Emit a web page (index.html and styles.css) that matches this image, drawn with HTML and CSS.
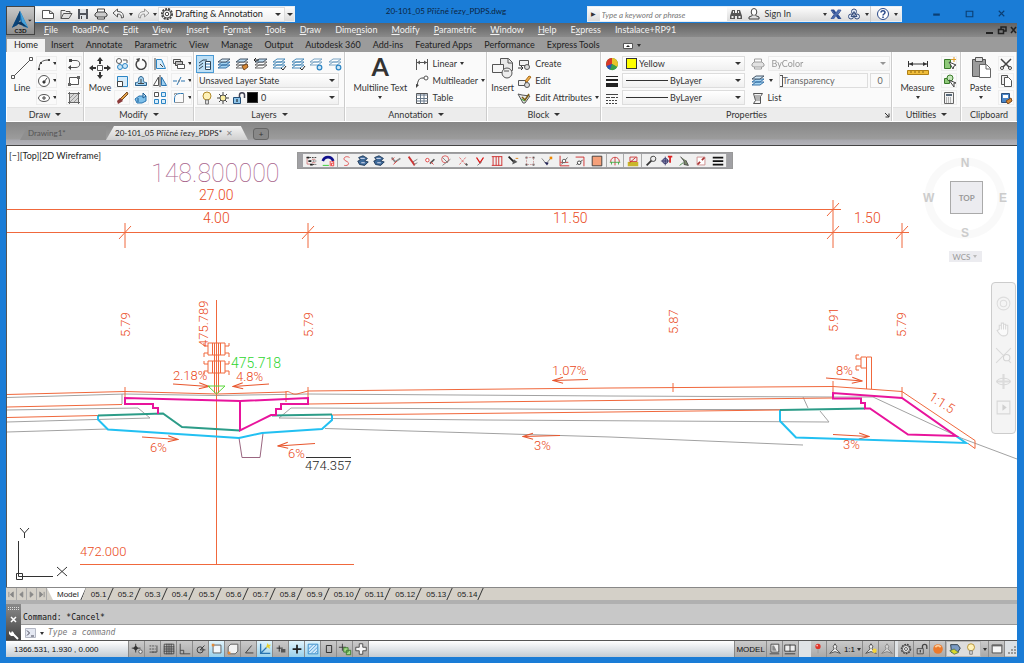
FILE: index.html
```html
<!DOCTYPE html>
<html lang="en">
    <head>
        <title>20-101_05 Příčné řezy_PDPS.dwg</title>
        <meta charset="utf-8">
        <link rel="stylesheet" href="styles.css">
    </head>
    <body>
        <!-- Icon set -->
        <svg class="defs" aria-hidden="true">
            <symbol id="i-logo" viewBox="0 0 28 29"><path d="M14 3 5 22l6-3 3-6 4 8 5 1z" fill="#1668a8"/><path d="M14 3v10l-3 6-6 3z" fill="#0c4377"/><path d="m14 3 9 19-6-2z" fill="#45a3dc"/><path d="m10 17 5-2 8 7-8-3z" fill="#0a3560"/><path d="m23 13h4l-2 2z" fill="#222"/></symbol>
            <symbol id="i-new" viewBox="0 0 16 16"><path d="M2.500 4.500h7l4 3v5h-11zM9.500 4.500v3h4" fill="#fff" stroke="#555"/></symbol>
            <symbol id="i-open" viewBox="0 0 16 16"><path d="M3 12.500v-8h4l1 1h4v2" fill="#eee" stroke="#555"/><path d="m3 12.500 2.500-5h8.500l-3 5z" fill="#ddd" stroke="#555"/></symbol>
            <symbol id="i-save" viewBox="0 0 16 16"><path d="M3 3h10v10H3z" fill="#50545c"/><path d="M5 3h6v4H5zM5 9h6v4H5z" fill="#dfe3e8"/><path d="M6 10h1v3H6z" fill="#444"/></symbol>
            <symbol id="i-print" viewBox="0 0 16 16"><path d="M4.500 6V3h7v3M4.500 10v3h7v-3" fill="#fff" stroke="#444"/><path d="M4 6h8l2 2v2l-2 1H4l-2-1V8z" fill="#ccc" stroke="#444"/></symbol>
            <symbol id="i-undo" viewBox="0 0 16 16"><path d="m2 7 4.500-4v2.500c4 0 6 1.500 6 6l-2 .5c0-3-1-4-4-4v3z" fill="#f4f4f4" stroke="#555"/></symbol>
            <symbol id="i-redo" viewBox="0 0 16 16"><path d="M14 7 9.500 3v2.500c-4 0-6 1.500-6 6l2 .5c0-3 1-4 4-4v3z" fill="#eee" stroke="#999"/></symbol>
            <symbol id="i-gear" viewBox="0 0 16 16"><circle cx="8" cy="8" r="5" fill="none" stroke="#444" stroke-width="2" stroke-dasharray="2 1"/><circle cx="8" cy="8" r="4" fill="#f2f2f2" stroke="#555"/><circle cx="8" cy="8" r="1.700" fill="#fff" stroke="#444"/></symbol>
            <symbol id="i-find" viewBox="0 0 16 16"><path d="M4 4h3v3h2V4h3l2 6v3H9v-3H7v3H2v-3z" fill="#555"/><path d="M3.500 10h2v2h-2zM10.500 10h2v2h-2zM5 5h1v2H5zM10 5h1v2h-1z" fill="#eee"/></symbol>
            <symbol id="i-user" viewBox="0 0 16 16"><ellipse cx="8" cy="6" rx="2.800" ry="3.500" fill="#fff" stroke="#444"/><path d="M6.500 9.500 3 11v2h10v-2l-3.500-1.500" fill="#ddd" stroke="#444"/></symbol>
            <symbol id="i-exchange" viewBox="0 0 16 16"><path d="M3 3.500h3L13 13h-3z" fill="#2d4d92"/><path d="M13 3.500h-3L3 13h3z" fill="#4d6cae"/><path d="M3 4l3 4.500L3 13M13 4l-3 4.500 3 4.500" stroke="#2d4d92" fill="none"/></symbol>
            <symbol id="i-a360" viewBox="0 0 16 16"><circle cx="8" cy="5.500" r="2.500" fill="#e4ecf8" stroke="#385080"/><circle cx="5" cy="10.500" r="2.500" fill="#e4ecf8" stroke="#385080"/><circle cx="11" cy="10.500" r="2.500" fill="#e4ecf8" stroke="#385080"/><path d="m8 5.500 3 5H5z" fill="none" stroke="#385080"/></symbol>
            <symbol id="i-help" viewBox="0 0 16 16"><circle cx="8" cy="8" r="5.500" fill="#fff" stroke="#2a4a8a"/><path d="M6 6.500c0-2.500 4-2.500 4 0 0 1.500-2 1.500-2 3M8 10.500v1.500" fill="none" stroke="#2a4a8a" stroke-width="1.500"/></symbol>
            <symbol id="i-line" viewBox="0 0 24 24"><path d="M3 21 21 3" stroke="#555" fill="none"/><path d="M1.500 19.500h3v3h-3zM19.500 1.500h3v3h-3z" fill="#fff" stroke="#555"/></symbol>
            <symbol id="i-arc" viewBox="0 0 16 16"><path d="M3 13c0-6 3-9 9-9" fill="none" stroke="#555"/><path d="M2 12h2v2H2zM4 6h2v2H4zM12 3h2v2h-2z" fill="#444"/></symbol>
            <symbol id="i-pline" viewBox="0 0 16 16"><path d="M5 4.500h5c5 0 5 7 0 7H3" fill="none" stroke="#555"/><path d="M5 9v5l-3-2.500zM3 3h3v3H3z" fill="#444"/></symbol>
            <symbol id="i-circle" viewBox="0 0 16 16"><circle cx="8" cy="8" r="5.500" fill="#fff" stroke="#555"/><path d="m8 9 3-4M7 8h2v2H7z" stroke="#444"/></symbol>
            <symbol id="i-rect" viewBox="0 0 16 16"><path d="M3.500 4.500h9v7h-9z" fill="#fff" stroke="#555"/><path d="M11 3h3v3h-3zM2 10h3v3H2z" fill="#666"/></symbol>
            <symbol id="i-ellipse" viewBox="0 0 16 16"><ellipse cx="8" cy="8" rx="5.500" ry="3.500" fill="#fff" stroke="#555"/><path d="M8 6v4M6 8h4" stroke="#444"/></symbol>
            <symbol id="i-hatch" viewBox="0 0 16 16"><path d="M3.500 3.500h9v9h-9z" fill="#d8d8d8" stroke="#666"/><path d="m4 8 4-4M4 12l8-8M8 12l4-4" stroke="#999"/><path d="M2 3.500h12M2 12.500h12M3.500 2v12M12.500 2v12" stroke="#666"/></symbol>
            <symbol id="i-move" viewBox="0 0 24 24"><path d="M12 4v4M12 16v4M4 12h4M16 12h4" stroke="#333" stroke-width="2"/><path d="m12 1 3 4H9zM12 23l3-4H9zM1 12l4-3v6zM23 12l-4-3v6z" fill="#333"/><path d="M9.500 9.500h5v5h-5z" fill="#fff" stroke="#555"/></symbol>
            <symbol id="i-copy" viewBox="0 0 16 16"><circle cx="5" cy="5" r="2.500" fill="#fff" stroke="#555"/><circle cx="6" cy="11" r="2.500" fill="#cde6f7" stroke="#2b85c4"/><circle cx="11" cy="10" r="2.500" fill="#cde6f7" stroke="#2b85c4"/><path d="M9 4h4v3" fill="none" stroke="#555"/></symbol>
            <symbol id="i-rotate" viewBox="0 0 16 16"><path d="M9 3.500a5 5 0 1 1-4 1" fill="none" stroke="#444" stroke-width="1.500"/><path d="m3 3 4-1-1 4z" fill="#444"/></symbol>
            <symbol id="i-stretch" viewBox="0 0 16 16"><path d="M4.500 3.500h5l4 9h-9z" fill="#d7ecfa" stroke="#2b85c4"/><path d="M3 2v12M8 8l3 3" stroke="#444"/></symbol>
            <symbol id="i-stack" viewBox="0 0 16 16"><path d="M2.500 3.500h7v4h-7z" fill="#eee" stroke="#555"/><path d="M4.500 5.500h7v4h-7z" fill="#bbb" stroke="#444"/><path d="M6.500 8.500h7v4h-7z" fill="#fff" stroke="#555"/></symbol>
            <symbol id="i-scale" viewBox="0 0 16 16"><path d="M3.500 3.500h10v10h-10z" fill="#d7ecfa" stroke="#2b85c4"/><path d="M3.500 8.500h5v5h-5z" fill="#fff" stroke="#444"/></symbol>
            <symbol id="i-offset" viewBox="0 0 16 16"><path d="M2.500 12.500h11v-3c-3 0-3-1-3-3 0-4-5-4-5 0 0 2 0 3-3 3z" fill="#9fd0f0" stroke="#2a5f8a"/><path d="M5 10.500h6M8 6v4" stroke="#444"/></symbol>
            <symbol id="i-mirror" viewBox="0 0 16 16"><path d="M6.500 4v8.500h-5z" fill="#fff" stroke="#555"/><path d="M9.500 4v8.500h5z" fill="#9fd0f0" stroke="#2b75b0"/><path d="M8 2v12" stroke="#444"/></symbol>
            <symbol id="i-trim" viewBox="0 0 16 16"><path d="M2 8h4M10 8h4M6 12l4-8" stroke="#2b75b0"/><path d="M7 8h2" stroke="#777"/></symbol>
            <symbol id="i-erase" viewBox="0 0 16 16"><path d="m13 2 1 2-6 6-2-1z" fill="#e0a24a" stroke="#7a4a20"/><path d="m3 11 3-3 3 3-5 3z" fill="#8c3a3a"/></symbol>
            <symbol id="i-explode" viewBox="0 0 16 16"><path d="M2 9 6 6h7v5l-4 2H4z" fill="#7fc0ea" stroke="#2b75b0"/><path d="m10 3 3 3-3 2zM5 8v4" stroke="#1d5c90" fill="#bfe2f8"/></symbol>
            <symbol id="i-array" viewBox="0 0 16 16"><path d="M2.500 2.500h4v4h-4z" fill="#fff" stroke="#555"/><path d="M9.500 2.500h4v4h-4zM2.500 9.500h4v4h-4zM9.500 9.500h4v4h-4z" fill="#d7ecfa" stroke="#2b85c4"/></symbol>
            <symbol id="i-fillet" viewBox="0 0 16 16"><path d="M3.500 12.500V9c0-4 2-5.500 6-5.500h3" fill="none" stroke="#2b75b0"/><path d="M3.500 5V3.500H6M12.500 4v8.500H4" fill="none" stroke="#999"/></symbol>
            <symbol id="i-lprop" viewBox="0 0 16 16"><path d="m2 7 4-3h4M2 10l4-3M2 13l4-3" fill="none" stroke="#345"/><path d="M8.500 5.500h5v8h-5z" fill="#fff" stroke="#345"/><path d="M9 8h4M9 11h4" stroke="#2b75b0"/></symbol>
            <symbol id="i-layer" viewBox="0 0 16 16"><path d="m2 12 4-3h8l-4 3zM2 9l4-3h8l-4 3z" fill="#fff" stroke="#666"/><path d="m2 6 4-3h8l-4 3z" fill="#bcdcf2" stroke="#456"/></symbol>
            <symbol id="i-layerb" viewBox="0 0 16 16"><path d="m2 12 4-3h8l-4 3zM2 9l4-3h8l-4 3z" fill="#a4d4f2" stroke="#3a74a8"/><path d="m2 6 4-3h8l-4 3z" fill="#d4ebfa" stroke="#456"/></symbol>
            <symbol id="i-blue" viewBox="0 0 6 6"><circle cx="3" cy="3" r="2" fill="#cde6f7" stroke="#2b85c4"/></symbol>
            <symbol id="i-lbrush" viewBox="0 0 16 16"><use href="#i-layer"/><path d="m8 10 5-2 1 3-4 3z" fill="#d88a35" stroke="#7a4a20"/></symbol>
            <symbol id="i-lprev" viewBox="0 0 16 16"><use href="#i-layer"/><path d="M1 4h5M1 4l2-2M1 4l2 2" stroke="#222"/></symbol>
            <symbol id="i-lfreeze" viewBox="0 0 16 16"><path d="m2 9 4-3h8l-4 3zM2 6l4-3h8l-4 3z" fill="#fff" stroke="#7aa4c4"/><use href="#i-blue" x="8" y="8" width="7" height="7"/></symbol>
            <symbol id="i-lcheck" viewBox="0 0 16 16"><path d="m2 12 4-3h8l-4 3zM2 9l4-3h8l-4 3zM2 6l4-3h8l-4 3z" fill="#fff" stroke="#4a8ab8"/><path d="m10 12 2 2 3-4" fill="none" stroke="#222"/></symbol>
            <symbol id="i-bulb" viewBox="0 0 16 16"><circle cx="8" cy="6" r="4" fill="#fff2b8" stroke="#b08a2a"/><path d="M6.500 10h3v4h-3z" fill="#ddd" stroke="#777"/></symbol>
            <symbol id="i-sun" viewBox="0 0 16 16"><path d="M8 2v12M2 8h12M4 4l8 8M12 4l-8 8" stroke="#444"/><circle cx="8" cy="8" r="3" fill="#fdf0a0" stroke="#555"/></symbol>
            <symbol id="i-lock" viewBox="0 0 16 16"><path d="M2.500 7.500h7v6h-7z" fill="#8cc4ea" stroke="#234f78"/><path d="M8.500 7V5c0-3 5-3 5 0v3" fill="none" stroke="#445" stroke-width="1.500"/><path d="M6 9v3" stroke="#111"/></symbol>
            <symbol id="i-linear" viewBox="0 0 16 16"><path d="M2.500 3v11M13.500 3v11M3 6.500h10" stroke="#555"/><path d="m3 6.500 3-2v4zM13 6.500l-3-2v4z" fill="#555"/></symbol>
            <symbol id="i-mleader" viewBox="0 0 16 16"><path d="M3 13c1-6 2-8 6-8h1" fill="none" stroke="#444"/><circle cx="12" cy="5" r="2" fill="#fff" stroke="#555"/><path d="m2 15 0-4 3 1z" fill="#444"/></symbol>
            <symbol id="i-table" viewBox="0 0 16 16"><path d="M2.500 3.500h11v10h-11z" fill="#fff" stroke="#555"/><path d="M2 5h12M2 8.500h12M2 11h12M6.500 4v10M10 4v10" stroke="#678"/></symbol>
            <symbol id="i-insert" viewBox="0 0 24 24"><path d="M9.500 2.500h8l4 4v8h-12z" fill="#e8e8e8" stroke="#555"/><path d="M17 3v4h4" fill="none" stroke="#555"/><path d="M1.500 8.500h11v8h-11z" fill="#f6f6f6" stroke="#555"/><circle cx="16" cy="17" r="5" fill="#eee" stroke="#555"/><path d="M13 15h5" stroke="#555"/></symbol>
            <symbol id="i-create" viewBox="0 0 16 16"><path d="M3.500 4.500h9v5h-9z" fill="#f2f2f2" stroke="#555"/><circle cx="11" cy="11" r="2.500" fill="#ddd" stroke="#555"/><path d="M2 12h5M5 10l2 2-2 2" fill="none" stroke="#333"/></symbol>
            <symbol id="i-bedit" viewBox="0 0 16 16"><path d="M2.500 7.500h7v5h-7z" fill="#f2f2f2" stroke="#555"/><circle cx="11" cy="12" r="2.500" fill="#ddd" stroke="#555"/><path d="m9 8 4-5 2 1-4 5z" fill="#f2b04a" stroke="#a66a1a"/></symbol>
            <symbol id="i-attr" viewBox="0 0 16 16"><path d="m2 4 4 1 8 1-5 7H7z" fill="#e8e8e8" stroke="#555"/><path d="m6 7 3 3 4-6" fill="none" stroke="#7a5a10" stroke-width="1.500"/><path d="M5 9l4 2" stroke="#3a9a3a"/></symbol>
            <symbol id="i-wheel" viewBox="0 0 16 16"><circle cx="8" cy="8" r="6" fill="#3a9a3a"/><path d="M8 8V2a6 6 0 0 1 5.200 9z" fill="#e8c42a"/><path d="M8 8 2.800 11A6 6 0 0 1 8 2z" fill="#d8382a"/><path d="m8 8 5.200 3A6 6 0 0 1 6 13.700z" fill="#3aa04a"/><path d="M8 8 6 13.700A6 6 0 0 1 2.500 10z" fill="#2a52c0"/></symbol>
            <symbol id="i-lweight" viewBox="0 0 16 16"><path d="M2 3h12v1H2zM2 6h12v2H2zM2 10h12v4H2z" fill="#222"/></symbol>
            <symbol id="i-ltype" viewBox="0 0 16 16"><path d="M2 4.500h12" stroke="#444"/><path d="M2 7.500h12" stroke="#444" stroke-dasharray="4 1"/><path d="M2 10.500h12M2 13.500h12" stroke="#444" stroke-dasharray="2 1"/></symbol>
            <symbol id="i-list" viewBox="0 0 16 16"><path d="M3.500 3.500h9l-2 3v7h-7l2-3z" fill="#f4f4f4" stroke="#555"/><path d="M5 6h5M5 8h5M5 10h5" stroke="#777"/></symbol>
            <symbol id="i-measure" viewBox="0 0 24 24"><path d="M2.500 5v6M21.500 5v6M3 8h18" stroke="#333"/><path d="m3 8 4-2v4zM21 8l-4-2v4z" fill="#333"/><path d="M1.500 14.500h21v4h-21z" fill="#f0bd3a" stroke="#b07f14"/><path d="M5 15v2M9 15v2M13 15v2M17 15v2" stroke="#8a6410"/></symbol>
            <symbol id="i-qsel" viewBox="0 0 16 16"><path d="M3.500 3.500h6v9h-6z" fill="#8fc97a" stroke="#3a7a2a"/><path d="m8 6 4 7 1-3 2-1z" fill="#fff" stroke="#444"/><path d="M13 1v5M10 3.500h5" stroke="#e09a20"/></symbol>
            <symbol id="i-sel" viewBox="0 0 16 16"><path d="M3.500 5.500h5v5h-5z" fill="#8fc97a" stroke="#3a7a2a"/><circle cx="9" cy="5" r="3" fill="#c4e6b8" stroke="#3a7a2a"/><path d="m8 7 5 7 0-4 2 0z" fill="#fff" stroke="#444"/></symbol>
            <symbol id="i-calc" viewBox="0 0 16 16"><path d="M3.500 2.500h9v11h-9z" fill="#f2f2f2" stroke="#666"/><path d="M5 4h6v2H5z" fill="#567"/><path d="M5 8h6M5 10h6M5 12h6" stroke="#777" stroke-dasharray="1 1"/></symbol>
            <symbol id="i-paste" viewBox="0 0 24 24"><path d="M3.500 3.500h13v17h-13z" fill="#9c9c9c" stroke="#555"/><path d="M6.500 1.500h7v4h-7z" fill="#ddd" stroke="#555"/><path d="M10.500 8.500h7l4 4v9h-11z" fill="#fff" stroke="#666"/><path d="M17 9v4h4" fill="none" stroke="#666"/></symbol>
            <symbol id="i-cut" viewBox="0 0 16 16"><path d="m3 3 9 9M13 3l-9 9" stroke="#444" stroke-width="1.500"/><circle cx="4" cy="12" r="1.500" fill="#fff" stroke="#444"/><circle cx="12" cy="12" r="1.500" fill="#fff" stroke="#444"/></symbol>
            <symbol id="i-pages" viewBox="0 0 16 16"><path d="M3.500 2.500h6v9h-6z" fill="#eee" stroke="#555"/><path d="M6.500 4.500h4l3 3v6h-7z" fill="#fff" stroke="#555"/></symbol>
            <symbol id="i-match" viewBox="0 0 16 16"><path d="M3.500 3.500h8v9h-8z" fill="#4a86c8" stroke="#2a5080"/><path d="M5 5h5v3H5z" fill="#fff"/><path d="m8 11 5-3 1 3-4 3z" fill="#d88a35" stroke="#7a4a20"/></symbol>
            <symbol id="i-tree" viewBox="0 0 16 16"><path d="M3 4h11M7 8h7M7 12h7" stroke="#333" stroke-dasharray="2 1"/><path d="M3 3h3v2H3zM5 7h3v2H5zM7 11h3v2H7z" fill="#222"/><path d="M3.500 5v6.500H7M9 6h4M9 10h4" fill="none" stroke="#c77"/></symbol>
            <symbol id="i-arch" viewBox="0 0 16 16"><path d="M2 8c2-6 10-6 12 0" fill="none" stroke="#11118c" stroke-width="3"/><path d="M2 13h7" stroke="#2c2"/><path d="M10.500 8v6M12 8.500h2.500v2H12v3h2.500v-3" fill="none" stroke="#e33"/></symbol>
            <symbol id="i-s" viewBox="0 0 16 16"><path d="M12 4C7 1 3 6 8 8s3 6-2 5" fill="none" stroke="#d44"/></symbol>
            <symbol id="i-roll" viewBox="0 0 16 16"><path d="m3 4 5-2 5 3-3 3 4 1-4 4-6-1-2-4 3-1z" fill="#3e6a9a" stroke="#1c3555"/><path d="M5 5h5M6 10h4" stroke="#eef"/></symbol>
            <symbol id="i-pen" viewBox="0 0 16 16"><path d="m3 4 4 5 6-4" fill="none" stroke="#888" stroke-width="2"/><path d="m5 12 4-4M3 7l3-3" stroke="#d33"/></symbol>
            <symbol id="i-pen2" viewBox="0 0 16 16"><path d="m3 3 7 10" stroke="#c33" stroke-width="2"/><path d="m8 9 5-3M9 12l4-2" stroke="#777"/></symbol>
            <symbol id="i-node" viewBox="0 0 16 16"><circle cx="5" cy="7" r="2" fill="#fff" stroke="#d33"/><path d="m8 11 5-5" stroke="#555" stroke-width="2"/><path d="m9 9 3 3" stroke="#d33"/></symbol>
            <symbol id="i-node2" viewBox="0 0 16 16"><circle cx="7" cy="6" r="4" fill="none" stroke="#d55"/><path d="m4 13 9-7M4 4l6 6" stroke="#777"/></symbol>
            <symbol id="i-cross" viewBox="0 0 16 16"><path d="m4 4 7 8M11 4l-7 8" stroke="#d66" stroke-dasharray="3 1"/><path d="m11 11 2 2" stroke="#555" stroke-width="2"/></symbol>
            <symbol id="i-tick" viewBox="0 0 16 16"><path d="m4 4 4 6 4-6" fill="none" stroke="#d11" stroke-width="1.500"/><path d="m5 13 5-4" stroke="#777"/></symbol>
            <symbol id="i-comb" viewBox="0 0 16 16"><path d="M2 3h12M3.500 3v10M7 3v10M10 3v10M13.500 3v10M2 13h12" stroke="#c22"/></symbol>
            <symbol id="i-arrowk" viewBox="0 0 16 16"><path d="m3 3 6 6" stroke="#222" stroke-width="2"/><path d="m7 12 6-3-4-3z" fill="#555"/><path d="M11 5h3" stroke="#d70"/></symbol>
            <symbol id="i-dots" viewBox="0 0 16 16"><path d="M3 3h2v2H3zM11 3h2v2h-2zM3 11h2v2H3zM11 11h2v2h-2z" fill="#222"/><path d="M4 4h8v8H4z" fill="none" stroke="#c99" stroke-dasharray="2 1"/></symbol>
            <symbol id="i-vee" viewBox="0 0 16 16"><path d="m2 5 5 6 6-7" fill="none" stroke="#777"/><path d="M11 3h3v3h-3z" fill="#e80"/><path d="m5 9 3 4 2-3z" fill="#225"/></symbol>
            <symbol id="i-graph" viewBox="0 0 16 16"><path d="M3.500 2v11.500H14M4 9.500h9" fill="none" stroke="#c22"/><path d="m5 12 7-8" stroke="#555"/><circle cx="8" cy="8" r="2" fill="#fff" stroke="#555"/></symbol>
            <symbol id="i-graph2" viewBox="0 0 16 16"><path d="M3 3.500h9.500V14" fill="none" stroke="#c22"/><path d="m4 12 7-5" stroke="#333"/><circle cx="7" cy="10" r="2" fill="#fff" stroke="#333"/></symbol>
            <symbol id="i-square" viewBox="0 0 16 16"><path d="M2.500 2.500h11v11h-11z" fill="#f5a07a" stroke="#333"/></symbol>
            <symbol id="i-bridge" viewBox="0 0 16 16"><path d="M3 9c0-7 10-7 10 0M8 4v9" fill="none" stroke="#c33"/><path d="M2 9.500h12M4 9v3M12 9v3" stroke="#4a4"/></symbol>
            <symbol id="i-pic" viewBox="0 0 16 16"><path d="M2 9h12v5H2z" fill="#c9b62a"/><path d="M4.500 3.500h8v5h-8z" fill="#eee" stroke="#c33"/><path d="m4 10 7-6" stroke="#c22"/></symbol>
            <symbol id="i-wrench" viewBox="0 0 16 16"><path d="m3 13 6-6" stroke="#333" stroke-width="2"/><circle cx="10.500" cy="5.500" r="3" fill="#eee" stroke="#333"/><path d="m11 5 3-3" stroke="#eee"/></symbol>
            <symbol id="i-text" viewBox="0 0 16 16"><path d="M9 3h5M11.500 3v7" stroke="#d22" stroke-width="2"/><circle cx="6" cy="8" r="3" fill="#99b" stroke="#336"/><path d="M6 3v10M1 8h10" stroke="#336"/></symbol>
            <symbol id="i-peak" viewBox="0 0 16 16"><path d="m4 3 4 5v4l5 1-3-6" fill="#7a8a6a" stroke="#444"/><path d="m3 13 4-3" stroke="#484"/></symbol>
            <symbol id="i-frame" viewBox="0 0 16 16"><path d="M3.500 3.500h9v9h-9z" fill="#fff" stroke="#c88"/><path d="m4 12 3-3M9 7l3-3" stroke="#a33" stroke-width="2"/></symbol>
            <symbol id="i-bars" viewBox="0 0 16 16"><path d="M2 3h12v2H2zM2 7h12v2H2zM2 11h12v2H2z" fill="#111"/></symbol>
            <symbol id="i-plus" viewBox="0 0 16 16"><path d="M8 3v10M3 8h10" stroke="#222" stroke-width="2"/></symbol>
            <symbol id="i-infer" viewBox="0 0 16 16"><path d="M6.500 2v10M2 7h10" stroke="#333"/><path d="m6.500 4 3 3-3 3-3-3z" fill="#333"/><circle cx="12" cy="11" r="2" fill="#eee" stroke="#555"/></symbol>
            <symbol id="i-snap" viewBox="0 0 16 16"><path d="M4 4.500h7M4 8h7M4 11.500h7" stroke="#444" stroke-dasharray="2 1"/><path d="M12.500 4v7.500H6" fill="none" stroke="#444"/></symbol>
            <symbol id="i-grid" viewBox="0 0 16 16"><path d="M2.500 2.500h11v11h-11zM5.500 2v12M8 2v12M10.500 2v12M2 5.500h12M2 8h12M2 10.500h12" fill="none" stroke="#444"/></symbol>
            <symbol id="i-ortho" viewBox="0 0 16 16"><path d="M2.500 2v11.500H14M2.500 9.500h4v4" fill="none" stroke="#444"/></symbol>
            <symbol id="i-polar" viewBox="0 0 16 16"><circle cx="7" cy="9" r="3.500" fill="none" stroke="#333"/><path d="M7 9h6M7 9l5-5" stroke="#333"/></symbol>
            <symbol id="i-osnap" viewBox="0 0 16 16"><path d="M3.500 3.500h9v9h-9z" fill="#f2f8fc" stroke="#555"/><path d="M2 2h3v3H2z" fill="#e08a3a"/></symbol>
            <symbol id="i-3dsnap" viewBox="0 0 16 16"><path d="M5.500 2.500h8v8l-3 3h-8v-8z" fill="#f2f2f2" stroke="#555"/><path d="M2 11h3v3H2z" fill="#e08a3a"/></symbol>
            <symbol id="i-angle" viewBox="0 0 16 16"><path d="M13 12.500H4L11 4" fill="none" stroke="#333"/></symbol>
            <symbol id="i-ducs" viewBox="0 0 16 16"><path d="M3 2v11h11M3 13l7-7" fill="none" stroke="#2b75b0" stroke-width="1.500"/><path d="m11 1 1 2 3 0-2 2 1 3-3-2-2 1 1-3z" fill="#e8d02a"/></symbol>
            <symbol id="i-dyn" viewBox="0 0 16 16"><path d="M6 4v7M3 7h7" stroke="#222"/><path d="M8 8h5v4H8z" fill="#555"/></symbol>
            <symbol id="i-transp" viewBox="0 0 16 16"><path d="M2.500 2.500h11v11h-11z" fill="#cfe8fa" stroke="#2b85c4"/><path d="m3 8 5-5M3 12l9-9M6 13l7-7M10 13l3-3" stroke="#4a9ad4"/></symbol>
            <symbol id="i-qp" viewBox="0 0 16 16"><path d="M5 4h6v8H5z" fill="none" stroke="#222"/></symbol>
            <symbol id="i-cycle" viewBox="0 0 16 16"><path d="M5 2v8M1 6h8" stroke="#333"/><path d="M6.500 6.500h5v5h-5zM9.500 9.500h5v5h-5z" fill="#a5dc8a" stroke="#3a7a2a"/></symbol>
            <symbol id="i-bigplus" viewBox="0 0 16 16"><path d="M6 2h4v4h4v4h-4v4H6v-4H2V6h4z" fill="#f6f6f6" stroke="#444"/></symbol>
            <symbol id="i-sheet" viewBox="0 0 16 16"><path d="M4.500 2.500h9v9h-9zM3 13.500h11" fill="#eee" stroke="#444"/><path d="M6 4h2l3 6H6z" fill="#888"/></symbol>
            <symbol id="i-views" viewBox="0 0 16 16"><path d="M2 3.500h12v7H2zM8 3v8M2 13.500h12" fill="#eee" stroke="#333"/></symbol>
            <symbol id="i-pin" viewBox="0 0 16 16"><circle cx="8" cy="5" r="3" fill="#e0352a"/><circle cx="7" cy="4" r="1" fill="#fbb"/><path d="M8 8v5" stroke="#999"/></symbol>
            <symbol id="i-anno" viewBox="0 0 16 16"><path d="M8 2 6 5l1 3-5 5 6-2 6 2-5-5 1-3z" fill="#f4f4f4" stroke="#444"/></symbol>
            <symbol id="i-annob" viewBox="0 0 16 16"><use href="#i-anno"/><circle cx="12" cy="10" r="2.500" fill="#f6d43a"/></symbol>
            <symbol id="i-ball" viewBox="0 0 16 16"><circle cx="8" cy="8" r="5.500" fill="#ec7a2c"/><path d="M5 6c2-3 5-2 6 0" stroke="#fcd0a0" fill="none" stroke-width="2"/></symbol>
            <symbol id="i-tray" viewBox="0 0 16 16"><path d="M3 3h8l3 4-3 5H4z" fill="#7a9ac4" stroke="#234"/><path d="m2 10 5-2 5 4-5 2z" fill="#d8d82a" stroke="#575"/></symbol>
            <symbol id="i-screen" viewBox="0 0 16 16"><path d="M2.500 3.500h11v9h-11z" fill="#f6f6f6" stroke="#444"/><path d="M2 3h12v2H2z" fill="#666"/></symbol>
            <symbol id="i-nwheel" viewBox="0 0 16 16"><circle cx="8" cy="8" r="6" fill="none" stroke="#ddd"/><circle cx="8" cy="8" r="3" fill="none" stroke="#ddd"/></symbol>
            <symbol id="i-pan" viewBox="0 0 16 16"><path d="M4 8V4h2v4-6h2v6-5h2v5-4h2v6c0 3-1 4-4 4s-4-2-6-5z" fill="#fafafa" stroke="#d8d8d8"/></symbol>
            <symbol id="i-zoom" viewBox="0 0 16 16"><path d="m1 1 14 14M1 15 15 1" stroke="#dadada"/><circle cx="11" cy="10" r="3" fill="#f6f6f6" stroke="#d4d4d4"/></symbol>
            <symbol id="i-orbit" viewBox="0 0 16 16"><path d="M8 1v14M1 8h14" stroke="#dcdcdc" stroke-width="2"/><ellipse cx="8" cy="8" rx="6" ry="3" fill="none" stroke="#d8d8d8"/></symbol>
            <symbol id="i-motion" viewBox="0 0 16 16"><path d="M2 2h12v12H2z" fill="none" stroke="#d8d8d8"/><path d="m7 5 4 3-4 3z" fill="#d0d0d0"/></symbol>
        </svg>

        <div id="top">
            <button class="app" aria-label="Application menu"><svg><use href="#i-logo"/></svg><b>C3D</b></button>
            <div id="titlebar">
                <div class="quick">
                    <button aria-label="New"><svg><use href="#i-new"/></svg></button>
                    <button aria-label="Open"><svg><use href="#i-open"/></svg></button>
                    <button aria-label="Save"><svg><use href="#i-save"/></svg></button>
                    <button aria-label="Print"><svg><use href="#i-print"/></svg></button>
                    <button class="drop" aria-label="Undo"><svg><use href="#i-undo"/></svg></button>
                    <button class="drop" aria-label="Redo"><svg><use href="#i-redo"/></svg></button>
                    <label class="combo workspace"><svg><use href="#i-gear"/></svg><select aria-label="Workspace"><option>Drafting &amp; Annotation</option></select></label>
                    <button class="drop more" aria-label="Customize"></button>
                </div>
                <h1>20-101_05 Příčné řezy_PDPS.dwg</h1>
                <div class="info">
                    <button class="toggle" aria-label="Toggle search">▶</button>
                    <input type="text" placeholder="Type a keyword or phrase" aria-label="Search">
                    <button aria-label="Find"><svg><use href="#i-find"/></svg></button>
                    <button class="signin drop"><svg><use href="#i-user"/></svg>Sign In</button>
                    <button aria-label="Exchange"><svg><use href="#i-exchange"/></svg></button>
                    <button class="drop" aria-label="A360"><svg><use href="#i-a360"/></svg></button>
                    <button class="drop help" aria-label="Help"><svg><use href="#i-help"/></svg></button>
                </div>
                <div class="winbtns">
                    <button aria-label="Minimize"><svg viewBox="0 0 10 10"><path d="M2 6h6" stroke="#0b3f74" stroke-width="2"/></svg></button>
                    <button aria-label="Maximize"><svg viewBox="0 0 10 10"><path d="M2 3h6v5H2z" stroke="#0b3f74" fill="none"/></svg></button>
                    <button aria-label="Close"><svg viewBox="0 0 10 10"><path d="m2.500 2.500 5 5m0-5-5 5" stroke="#0b3f74"/></svg></button>
                </div>
            </div>
            <nav id="menubar">
                <a href="#"><u>F</u>ile</a><a href="#">RoadPAC</a><a href="#"><u>E</u>dit</a><a href="#"><u>V</u>iew</a><a href="#"><u>I</u>nsert</a><a href="#">F<u>o</u>rmat</a><a href="#"><u>T</u>ools</a><a href="#"><u>D</u>raw</a><a href="#">Dime<u>n</u>sion</a><a href="#"><u>M</u>odify</a><a href="#"><u>P</u>arametric</a><a href="#"><u>W</u>indow</a><a href="#"><u>H</u>elp</a><a href="#">E<u>x</u>press</a><a href="#">Instalace+RP91</a>
                <svg viewBox="0 0 34 12" class="docbtns"><path d="M3 9h7" stroke="#222" stroke-width="2"/><path d="M15.500 5.500h5v4h-5zM18 5V3h5v4h-2M28 3l5 6m0-6-5 6" fill="none" stroke="#222" stroke-width="1.500"/></svg>
            </nav>
        </div>

        <nav id="tabs">
            <a href="#" class="on">Home</a><a href="#">Insert</a><a href="#">Annotate</a><a href="#">Parametric</a><a href="#">View</a><a href="#">Manage</a><a href="#">Output</a><a href="#">Autodesk 360</a><a href="#">Add-ins</a><a href="#">Featured Apps</a><a href="#">Performance</a><a href="#">Express Tools</a>
            <button class="drop min" aria-label="Minimize ribbon"><svg viewBox="0 0 12 8"><path d="M1.500 1.500h9v5h-9z" fill="#fff" stroke="#555"/><path d="m4 5 2-2 2 2z" fill="#222"/></svg></button>
        </nav>

        <div id="ribbon">
            <section>
                <div class="panel">
                    <button class="big"><svg><use href="#i-line"/></svg>Line</button>
                    <div class="tools">
                        <button class="drop" aria-label="Arc"><svg><use href="#i-arc"/></svg></button>
                        <button class="drop" aria-label="Circle"><svg><use href="#i-circle"/></svg></button>
                        <button class="drop" aria-label="Ellipse"><svg><use href="#i-ellipse"/></svg></button>
                        <button aria-label="Polyline"><svg><use href="#i-pline"/></svg></button>
                        <button aria-label="Rectangle"><svg><use href="#i-rect"/></svg></button>
                        <button aria-label="Hatch"><svg><use href="#i-hatch"/></svg></button>
                    </div>
                </div>
                <h2 class="more">Draw</h2>
            </section>
            <section>
                <div class="panel">
                    <button class="big"><svg><use href="#i-move"/></svg>Move</button>
                    <div class="tools">
                        <button aria-label="Copy"><svg><use href="#i-copy"/></svg></button>
                        <button aria-label="Scale"><svg><use href="#i-scale"/></svg></button>
                        <button aria-label="Erase"><svg><use href="#i-erase"/></svg></button>
                        <button aria-label="Rotate"><svg><use href="#i-rotate"/></svg></button>
                        <button aria-label="Offset"><svg><use href="#i-offset"/></svg></button>
                        <button aria-label="Explode"><svg><use href="#i-explode"/></svg></button>
                        <button aria-label="Stretch"><svg><use href="#i-stretch"/></svg></button>
                        <button aria-label="Mirror"><svg><use href="#i-mirror"/></svg></button>
                        <button aria-label="Array"><svg><use href="#i-array"/></svg></button>
                        <button class="drop" aria-label="Draw order"><svg><use href="#i-stack"/></svg></button>
                        <button class="drop" aria-label="Trim"><svg><use href="#i-trim"/></svg></button>
                        <button class="drop" aria-label="Fillet"><svg><use href="#i-fillet"/></svg></button>
                    </div>
                </div>
                <h2 class="more">Modify</h2>
            </section>
            <section>
                <div class="panel rows">
                    <div class="row layertools">
                        <button class="pressed" aria-label="Layer properties"><svg><use href="#i-lprop"/></svg></button>
                        <button aria-label="Make current"><svg><use href="#i-layerb"/></svg></button>
                        <button aria-label="Match layer"><svg><use href="#i-lbrush"/></svg></button>
                        <button aria-label="Previous layer"><svg><use href="#i-lprev"/></svg></button>
                        <button aria-label="Isolate"><svg><use href="#i-lcheck"/></svg></button>
                        <button aria-label="Unisolate"><svg><use href="#i-lcheck"/></svg></button>
                        <button aria-label="Freeze"><svg><use href="#i-lfreeze"/></svg></button>
                        <button aria-label="Off"><svg><use href="#i-lfreeze"/></svg></button>
                    </div>
                    <label class="combo"><select aria-label="Layer state"><option>Unsaved Layer State</option></select></label>
                    <label class="combo layer"><svg><use href="#i-bulb"/></svg><svg><use href="#i-sun"/></svg><svg><use href="#i-lock"/></svg><i class="swatch black"></i><select aria-label="Layer"><option>0</option></select></label>
                </div>
                <h2 class="more">Layers</h2>
            </section>
            <section>
                <div class="panel">
                    <button class="big wide"><span class="letter">A</span>Multiline Text<i class="caret"></i></button>
                    <div class="tools text">
                        <button class="drop"><svg><use href="#i-linear"/></svg>Linear</button>
                        <button class="drop"><svg><use href="#i-mleader"/></svg>Multileader</button>
                        <button><svg><use href="#i-table"/></svg>Table</button>
                    </div>
                </div>
                <h2 class="more">Annotation</h2>
            </section>
            <section>
                <div class="panel">
                    <button class="big"><svg><use href="#i-insert"/></svg>Insert</button>
                    <div class="tools text">
                        <button><svg><use href="#i-create"/></svg>Create</button>
                        <button><svg><use href="#i-bedit"/></svg>Edit</button>
                        <button class="drop"><svg><use href="#i-attr"/></svg>Edit Attributes</button>
                    </div>
                </div>
                <h2 class="more">Block</h2>
            </section>
            <section>
                <div class="panel props">
                    <div class="rows">
                        <div class="row"><svg><use href="#i-wheel"/></svg><label class="combo"><i class="swatch yellow"></i><select aria-label="Object color"><option>Yellow</option></select></label></div>
                        <div class="row"><svg><use href="#i-lweight"/></svg><label class="combo"><i class="rule"></i><select aria-label="Lineweight"><option>ByLayer</option></select></label></div>
                        <div class="row"><svg><use href="#i-ltype"/></svg><label class="combo"><i class="rule"></i><select aria-label="Linetype"><option>ByLayer</option></select></label></div>
                    </div>
                    <div class="rows">
                        <div class="row"><svg class="dim"><use href="#i-print"/></svg><label class="combo dim"><select aria-label="Plot style"><option>ByColor</option></select></label></div>
                        <div class="row"><button class="drop" aria-label="Transparency source"><svg><use href="#i-layerb"/></svg></button><label class="slider" for="transp"><i></i>Transparency</label><input id="transp" type="text" value="0"></div>
                        <div class="row"><button class="list"><svg><use href="#i-list"/></svg>List</button></div>
                    </div>
                </div>
                <h2 class="launcher"><span>Properties</span><svg viewBox="0 0 8 8"><path d="m2 2 4 4M6 2.500V6H2.500" fill="none" stroke="#333"/></svg></h2>
            </section>
            <section>
                <div class="panel">
                    <button class="big mid"><svg><use href="#i-measure"/></svg>Measure<i class="caret"></i></button>
                    <div class="tools">
                        <button aria-label="Quick select"><svg><use href="#i-qsel"/></svg></button>
                        <button aria-label="Select all"><svg><use href="#i-sel"/></svg></button>
                        <button aria-label="Calculator"><svg><use href="#i-calc"/></svg></button>
                    </div>
                </div>
                <h2 class="more">Utilities</h2>
            </section>
            <section>
                <div class="panel">
                    <button class="big clip"><svg><use href="#i-paste"/></svg>Paste<i class="caret"></i></button>
                    <div class="tools">
                        <button aria-label="Cut"><svg><use href="#i-cut"/></svg></button>
                        <button aria-label="Copy clip"><svg><use href="#i-pages"/></svg></button>
                        <button aria-label="Match properties"><svg><use href="#i-match"/></svg></button>
                    </div>
                </div>
                <h2>Clipboard</h2>
            </section>
        </div>

        <nav id="files">
            <a href="#">Drawing1*</a>
            <a href="#" class="on">20-101_05 Příčné řezy_PDPS* <span>✕</span></a>
            <button aria-label="New drawing">+</button>
        </nav>

        <main id="canvas">
            <svg class="drawing" viewBox="7 146 1010 441" preserveAspectRatio="xMinYMin meet">
                <defs>
                    <marker id="head" viewBox="0 0 12 8" refX="11" refY="4" markerWidth="12" markerHeight="8" orient="auto"><path d="M1 1 11 4 1 7" fill="none" stroke="#e8552c"/></marker>
                </defs>

                <!-- Terrain and pavement layers -->
                <g class="ground">
                    <path d="M7 397.500 125 394l92 1.500 91-1.500 302 2 223 1h40l88 41 56 21"/>
                    <path d="m7 410 131-2 12 10-143 4M7 432l101-3M122 394v10"/>
                    <path d="M308 408h-17l-12 10 206 2 344 2-9-11M308 408l302 1.500h170M325 428.500l185 5.500 100 3 193 8M803 397l5 11"/>
                </g>
                <g class="road">
                    <path d="m7 394.500 118-3 92 2.500 69-2c3-2 5 3 11 2l11-3 302-3 223-1.500 69 5 73 49v8l-7-5"/>
                    <path d="m7 407 115-2.500M7 417.500l91-2M308 404l302-3.500 223-2.500M332 415l278-3 170-2"/>
                    <path d="M125 387v12M308 387v17M833 381v12M902 387v10M673 383v9M286 391v11"/>
                    <path d="M7 209.500h834M7 232.500h902M125 223v25M308 223v25M833 200v48M902 223v25"/>
                    <path d="m119 239 12-13M302 239l12-13M827 239l12-13M827 216l12-13M896 239l12-13"/>
                    <path d="M216.500 300v264M80 564.500h274"/>
                    <path d="M214.500 343v50M218.500 343v50M208 343h17M208 343v12h17v-12M208 361h17v12h-17zM212.500 343v12M220.500 343v12M212.500 361v12M220.500 361v12"/>
                    <path d="M208 346h-4v-3M208 353h-4v4M208 364h-4v-3M208 371h-4v4M225 346h4v-3M225 353h4v4M225 364h4v-3M225 371h4v4"/>
                    <path d="M866.500 389v-32h5v32M866 357h-5v11h5M861 359h-5v-4h3M861 366h-5v4h3"/>
                </g>
                <g class="arrows">
                    <path d="m173 384 36 2.500"/><path d="m269 384-36 2.500"/><path d="m142 437 36 2.500"/><path d="m315 443.500-37 2.500"/><path d="m588 379.500-35 1"/><path d="m560 435.500-37 1"/><path d="m826 378 36 3"/><path d="m833 434.500 36 2"/>
                </g>
                <path class="drain" d="m239 438 3 19.500h18l3-24"/>
                <path class="mark" d="m208 386 8.500 8 8.500-8z"/>
                <g class="base">
                    <path d="M98 415.500v4l10 10 131 8.500 23-5 60-4 10-9v-5M780 410v11l16 16.500 170 5.500-10-7"/>
                    <path class="fill" d="m98 415.500 65-2 19 13.500 58 3.500M272 415.500l60-1M780 410l85-1.500"/>
                    <path class="slab" d="M158 414v-6h-5v-4h-28v-6l115 3 68-3v6h-27v5h-5v6h-5l-31 15.500V401M833 398.500V393l69 5 54 38-48-1.500-38-26h-5V403h-4v-4.500z"/>
                </g>

                <!-- Dimensions -->
                <text class="station" x="151" y="182">148.800000</text>
                <g class="dim14">
                    <text x="199" y="200">27.00</text>
                    <text x="203" y="223">4.00</text>
                    <text x="553" y="223">11.50</text>
                    <text x="854" y="223">1.50</text>
                    <text class="green" x="231" y="368">475.718</text>
                </g>
                <g class="dim13">
                    <text transform="translate(130 337) rotate(-90)">5.79</text>
                    <text transform="translate(208 347) rotate(-90)">475.789</text>
                    <text transform="translate(313 337) rotate(-90)">5.79</text>
                    <text transform="translate(678 334) rotate(-90)">5.87</text>
                    <text transform="translate(838 332) rotate(-90)">5.91</text>
                    <text transform="translate(906 337) rotate(-90)">5.79</text>
                    <text transform="translate(928 399) rotate(33)">1:1.5</text>
                    <text x="173" y="380">2.18%</text>
                    <text x="236" y="381">4.8%</text>
                    <text x="150" y="452">6%</text>
                    <text x="288" y="458">6%</text>
                    <text x="552" y="375">1.07%</text>
                    <text x="534" y="450">3%</text>
                    <text x="843" y="449">3%</text>
                    <text x="836" y="375">8%</text>
                    <text x="80" y="556">472.000</text>
                    <text class="black" x="305" y="470">474.357</text>
                </g>
                <g class="ucs">
                    <path d="M306 457.500h45M16.500 573.500h6v6h-6zM18.500 541v35.500H53"/>
                    <path d="m20 528 4.500 5 4.500-5M24.500 533v5M57 567l10 9M67 567l-10 9"/>
                </g>
            </svg>

            <p class="viewlabel">[−][Top][2D Wireframe]</p>

            <div class="floatbar">
                <div><svg><use href="#i-tree"/></svg><svg><use href="#i-arch"/></svg></div>
                <div>
                    <svg><use href="#i-s"/></svg><svg><use href="#i-roll"/></svg><svg><use href="#i-roll"/></svg><svg><use href="#i-pen"/></svg>
                    <svg><use href="#i-pen2"/></svg><svg><use href="#i-node"/></svg><svg><use href="#i-node2"/></svg><svg><use href="#i-cross"/></svg>
                    <svg><use href="#i-tick"/></svg><svg><use href="#i-comb"/></svg><svg><use href="#i-arrowk"/></svg><svg><use href="#i-dots"/></svg>
                    <svg><use href="#i-vee"/></svg><svg><use href="#i-graph"/></svg><svg><use href="#i-graph2"/></svg><svg><use href="#i-square"/></svg>
                </div>
                <div><svg><use href="#i-bridge"/></svg></div>
                <div><svg><use href="#i-pic"/></svg></div>
                <div><svg><use href="#i-wrench"/></svg><svg><use href="#i-text"/></svg><svg><use href="#i-peak"/></svg><svg><use href="#i-frame"/></svg><svg><use href="#i-bars"/></svg></div>
            </div>

            <div class="viewcube">
                <b>N</b>
                <div><b>W</b><button>TOP</button><b>E</b></div>
                <b>S</b>
                <button class="wcs">WCS <i class="caret"></i></button>
            </div>

            <div class="navbar">
                <button aria-label="Wheel"><svg><use href="#i-nwheel"/></svg></button>
                <button aria-label="Pan"><svg><use href="#i-pan"/></svg></button>
                <button aria-label="Zoom"><svg><use href="#i-zoom"/></svg></button>
                <button aria-label="Orbit"><svg><use href="#i-orbit"/></svg></button>
                <button aria-label="Motion"><svg><use href="#i-motion"/></svg></button>
            </div>
        </main>

        <nav id="layouts">
            <button aria-label="First"><svg viewBox="0 0 8 8"><path d="M1 1v6M6 1 2.500 4 6 7z"/></svg></button><button aria-label="Previous"><svg viewBox="0 0 8 8"><path d="M5.500 1 2 4l3.500 3z"/></svg></button><button aria-label="Next"><svg viewBox="0 0 8 8"><path d="M2.500 1 6 4 2.500 7z"/></svg></button><button aria-label="Last"><svg viewBox="0 0 8 8"><path d="M7 1v6M2 1l3.500 3L2 7z"/></svg></button>
            <a href="#" class="on">Model</a><a href="#">05.1</a><a href="#">05.2</a><a href="#">05.3</a><a href="#">05.4</a><a href="#">05.5</a><a href="#">05.6</a><a href="#">05.7</a><a href="#">05.8</a><a href="#">05.9</a><a href="#">05.10</a><a href="#">05.11</a><a href="#">05.12</a><a href="#">05.13</a><a href="#">05.14</a>
        </nav>

        <div id="command">
            <div class="grip">
                <svg viewBox="0 0 15 37"><path d="M2 3.500h11M2 5.500h11" stroke="#ddd" stroke-dasharray="1 1"/><path d="m5 13 5 5m0-5-5 5" stroke="#fff" stroke-width="1.500"/><path d="m7 30 5 5" stroke="#fff" stroke-width="2"/><path d="M3 27v3l2 2h3v-3l-2-2-1 2z" fill="#fff"/></svg>
            </div>
            <div class="lines">
                <p>Command: *Cancel*</p>
                <label><svg viewBox="0 0 11 10"><path d="M.5.500h10v9H.5z" fill="#e4e8f2" stroke="#b4b8c4"/><path d="m2 2.500 2.500 2.500L2 7.500M6 8h3" fill="none" stroke="#445"/></svg><i class="caret"></i><input type="text" placeholder="Type a command" aria-label="Command"></label>
            </div>
        </div>

        <footer id="status">
            <span class="coords">1366.531, 1.930 , 0.000</span>
            <div class="group">
                <button aria-label="Infer"><svg><use href="#i-infer"/></svg></button>
                <button aria-label="Snap"><svg><use href="#i-snap"/></svg></button>
                <button aria-label="Grid"><svg><use href="#i-grid"/></svg></button>
                <button aria-label="Ortho"><svg><use href="#i-ortho"/></svg></button>
                <button aria-label="Polar"><svg><use href="#i-polar"/></svg></button>
                <button class="lit" aria-label="Object snap"><svg><use href="#i-osnap"/></svg></button>
                <button aria-label="3D snap"><svg><use href="#i-3dsnap"/></svg></button>
                <button aria-label="Tracking"><svg><use href="#i-angle"/></svg></button>
                <button class="lit" aria-label="Dynamic UCS"><svg><use href="#i-ducs"/></svg></button>
                <button aria-label="Dynamic input"><svg><use href="#i-dyn"/></svg></button>
                <button class="lit" aria-label="Lineweight"><svg><use href="#i-plus"/></svg></button>
                <button class="lit" aria-label="Transparency"><svg><use href="#i-transp"/></svg></button>
                <button aria-label="Quick properties"><svg><use href="#i-qp"/></svg></button>
                <button aria-label="Cycling"><svg><use href="#i-cycle"/></svg></button>
                <button aria-label="Monitor"><svg><use href="#i-bigplus"/></svg></button>
            </div>
            <div class="group right">
                <button class="label">MODEL</button>
                <button aria-label="Layout"><svg><use href="#i-sheet"/></svg></button>
                <button aria-label="Quick view"><svg><use href="#i-views"/></svg></button>
                <i class="gap"></i>
                <button aria-label="Marker"><svg><use href="#i-pin"/></svg></button>
                <button class="label"><svg><use href="#i-anno"/></svg>1:1<i class="caret"></i></button>
                <button aria-label="Annotation visibility"><svg><use href="#i-annob"/></svg></button>
                <button aria-label="Auto scale"><svg class="dim"><use href="#i-anno"/></svg></button>
                <i class="gap thin"></i>
                <button aria-label="Workspace settings"><svg><use href="#i-gear"/></svg></button>
                <button aria-label="Lock"><svg class="gray"><use href="#i-lock"/></svg></button>
                <button aria-label="Hardware"><svg><use href="#i-ball"/></svg></button>
                <span class="tray"><svg><use href="#i-tray"/></svg><svg><use href="#i-bulb"/></svg></span>
                <button class="slim" aria-label="Tray menu"><i class="caret"></i></button>
                <button aria-label="Clean screen"><svg><use href="#i-screen"/></svg></button>
                <svg class="resize" viewBox="0 0 12 15"><path d="M3 12h2M6 12h2M9 12h2M6 9h2M9 9h2M9 6h2" stroke="#999" stroke-width="2"/></svg>
            </div>
        </footer>
    </body>
</html>
```
FILE: styles.css
```css
* {box-sizing: border-box;}
body {display: flex; flex-direction: column; height: 100vh; margin: 0px; padding: 0px 7px 6px 6px; overflow: hidden; background: #1a7cd6; color: #333; font-family: Lato, "Open Sans", sans-serif; font-size: 9px; line-height: 12px;}
h1, h2, p {margin: 0px; font-size: 9px; font-weight: 400;}
a {color: inherit; text-decoration: none; white-space: nowrap;}
button, select, input {margin: 0px; padding: 0px; border: 0px; background: none; color: inherit; font: inherit; white-space: nowrap;}
select {appearance: none; flex: 1; min-width: 0px; height: 100%;}
svg {display: block; flex: none; width: 16px; height: 16px;}
.defs {position: absolute; width: 0px; height: 0px;}
.dim {opacity: 0.5;}

/* Small triangles used by all drop-downs */
.caret, .drop::after, .combo::after, .more::after {content: ""; flex: none; width: 0px; height: 0px; border: 2px solid transparent; border-top: 3px solid #333; border-bottom: 0px;}
.combo::after, .more::after {border-left-width: 3px; border-right-width: 3px;}
.drop {display: flex; align-items: center; gap: 3px;}

/* Title bar */
#top {display: grid; grid-template-columns: 29px 1fr; grid-template-rows: 23px 14px; background: linear-gradient(#1a7cd6 23px, #626262 23px, #8a8a8a);}
.app {grid-row: 1 / 3; position: relative; margin-top: 6px; height: 29px; border: 1px solid #444; background: linear-gradient(#c8c8c8, #8e8e8e);}
.app svg {width: 26px; height: 26px;}
.app b {position: absolute; left: 0px; right: 0px; bottom: 0px; font-size: 6px; line-height: 7px; color: #111;}
#titlebar {display: flex; align-items: flex-end; padding-bottom: 1px;}
#titlebar button {display: flex; align-items: center;}
.quick, .info {display: flex; align-items: center; justify-content: space-between; height: 16px; background: linear-gradient(#fcfcfc, #dcdcdc); border: 1px solid #e8eef4;}
.quick {width: 260px; padding: 0px 1px 0px 4px;}
.quick .drop {gap: 2px;}
.combo.workspace {flex: none; width: 127px; height: 15px; padding-left: 0px; gap: 0px; color: #222;}
#titlebar h1 {flex: 1; padding-left: 10px; text-align: center; font-size: 8px; line-height: 21px; color: #0c2440;}
.info {width: 315px; padding-right: 3px;}
.info .toggle {width: 10px; justify-content: center; font-size: 6px;}
.info input {width: 127px; height: 14px; padding: 2px 0px 0px 2px; background: #fff; font-size: 8px; font-style: italic;}
.info input::placeholder, #command input::placeholder {color: #777;}
.signin {width: 81px;}
.signin::after {margin-left: auto;}
.help {border-left: 1px solid #ccc; padding-left: 4px;}
.winbtns {display: flex; width: 115px; justify-content: space-between; padding: 0px 10px 3px 29px;}
.winbtns svg {width: 11px; height: 11px;}

/* Menu bar and ribbon tabs */
#menubar {display: flex; align-items: center; gap: 14px; padding-left: 9px; color: #f2f2f2;}
#menubar u {text-underline-offset: 1px;}
#menubar .docbtns {width: 34px; height: 12px; margin-left: auto;}
#tabs {display: flex; align-items: stretch; height: 15px; padding: 2px 0px 0px 1px; gap: 12px; background: #9b9b9b; color: #222; line-height: 12px;}
#tabs .on {padding: 0px 7px; margin-right: -6px; background: #f1f1f1;}
.min {margin-left: 10px;}
.min svg {width: 12px; height: 8px;}

/* Ribbon */
#ribbon {display: grid; grid-template-columns: 78fr 110fr 151fr 142fr 114fr 291fr 69fr 56fr; height: 70px; border-bottom: 1px solid #fff; background: #fafafa;}
#ribbon section {display: flex; flex-direction: column; min-width: 0px; border-left: 1px solid #fff; border-right: 1px solid #ccc;}
#ribbon h2 {display: flex; align-items: center; justify-content: center; gap: 5px; height: 14px; background: #ececec; border-top: 1px solid #e2e2e2;}
#ribbon .launcher {display: grid; grid-template-columns: 1fr auto 1fr;}
.launcher span {grid-column: 2;}
#ribbon .launcher svg {justify-self: end; width: 8px; height: 8px;}
.panel {display: flex; flex: 1; gap: 1px; padding: 4px 1px 2px 2px;}
.rows {display: flex; flex-direction: column; gap: 2px;}
.row {display: flex; height: 15px; align-items: center; gap: 2px;}
.big {display: flex; flex-direction: column; align-items: center; width: 26px; gap: 2px;}
.big svg, .letter {width: 24px; height: 24px;}
.big.wide {width: 66px;}
.big.mid {width: 45px;}
.big.clip {width: 33px;}
.letter {font-size: 25px; line-height: 20px; font-weight: 700;}
.tools {display: grid; flex: 1; grid-auto-flow: column; grid-template-rows: repeat(3, 15px); gap: 2px 0px; justify-content: space-between;}
.tools button {display: flex; align-items: center; gap: 1px; outline: 1px solid #eeeeee; outline-offset: -1px;}
.tools.text {justify-content: start;}
.tools.text button {gap: 3px; outline: 0px;}
.layertools {justify-content: space-between;}
.layertools .pressed {background: #bcdff6; outline: 1px solid #4a9ad4;}
.combo {display: flex; align-items: center; flex: 1; height: 15px; gap: 2px; padding: 0px 3px; border: 1px solid #ddd; background: linear-gradient(#fff, #f0f0f0);}
.panel.rows {gap: 2px;}
.panel.rows .combo {flex: none; margin-right: 4px; padding-left: 1px;}
.combo.layer {gap: 0px;}
.layer select {padding-left: 3px;}
.swatch {flex: none; width: 11px; height: 11px; border: 1px solid #333;}
.black {background: #000;}
.yellow {background: #ffff00;}
.rule {width: 42px; border-top: 1px solid #333;}
.panel.props {gap: 5px;}
.props .rows {flex: 1;}
.slider {display: flex; align-items: center; flex: 1; height: 15px; margin-left: 4px; border: 1px solid #ddd; color: #666;}
.slider i {width: 3px; height: 12px; border: 1px solid #555; border-left: 0px;}
#transp {width: 20px; height: 15px; text-align: center; border: 1px solid #ddd; color: #666;}
.list {display: flex; align-items: center; gap: 2px;}

/* Drawing tabs */
#files {display: flex; height: 24px; padding: 4px 0px 5px 14px; background: linear-gradient(#878787, #9c9c9c 17px, #a8a8ae 18px, #b4b4ba); border-bottom: 1px solid #444; font-size: 8px; line-height: 14px;}
#files a {width: 86px; padding-left: 8px; color: #555; background: #8f8f8f; clip-path: polygon(8px 0px, 100% 0px, 100% 100%, 0px 100%);}
#files .on {width: 142px; padding-left: 9px; color: #222; background: linear-gradient(#f4f4f4, #cfcfcf); clip-path: polygon(8px 0px, 95% 0px, 100% 100%, 0px 100%);}
#files span {margin-left: 2px; color: #888;}
#files button {width: 16px; height: 12px; margin: 2px 0px 0px 5px; border: 1px solid #666; border-radius: 3px; background: #888; line-height: 9px;}

/* Drawing area */
#canvas {position: relative; flex: 1; min-height: 0px; overflow: hidden; border-left: 1px solid #555; background: #fff;}
.drawing {width: 100%; height: auto;}
.drawing path {fill: none;}
.ground {stroke: #a2a2a2;}
.road {stroke: #f0683c;}
.arrows path {stroke: #e8552c; marker-end: url(#head);}
.drain {stroke: #9a6680;}
.mark {stroke: #5ad83a;}
.base {stroke: #22c0f2; stroke-width: 2px;}
.base .fill {stroke: #2c9c88;}
.base .slab {stroke: #e8149c;}
.ucs {stroke: #333;}
.drawing text {font-family: Roboto, "Liberation Sans", sans-serif; font-weight: 300; fill: #ea4a22;}
.drawing .station {font-size: 25px; fill: #a8648c; font-weight: 100;}
.dim14 {font-size: 14px;}
.dim13 {font-size: 13px;}
.drawing .green {fill: #2fd62f;}
.drawing .black {fill: #222;}
.viewlabel {position: absolute; left: 2px; top: 4px; color: #222;}

.floatbar {position: absolute; left: 290px; top: 6px; display: flex; width: 436px; height: 17px; padding: 1px 5px; border: 1px solid #999; background: #a0a0a4;}
.floatbar div {display: flex; flex: 1; align-items: center; justify-content: space-around; background: #f0f0f0; border-right: 1px solid #aaa;}
.floatbar div:nth-child(1) {flex: 2;}
.floatbar div:nth-child(2) {flex: 16;}
.floatbar div:nth-child(5) {flex: 5;}
.floatbar svg {width: 14px; height: 14px;}

.viewcube {position: absolute; top: 9px; right: 10px; display: flex; flex-direction: column; align-items: center; width: 84px; background: radial-gradient(circle at 42px 43px, transparent 32px, #f9f9f9 33px, #f9f9f9 40px, transparent 41px);}
.viewcube b {font-family: "Liberation Sans", sans-serif; font-size: 12px; line-height: 16px; color: #ccc;}
.viewcube div {display: flex; align-items: center; justify-content: space-between; width: 100%;}
.viewcube button {width: 33px; height: 33px; margin: 10px 0px 11px; border: 1px solid #aaa; background: #ececf0; color: #999; font-size: 8px; font-weight: 700;}
.viewcube .wcs {display: flex; align-items: center; justify-content: center; gap: 3px; height: 11px; border: 0px; font-weight: 400;}
.wcs .caret {border-top-color: #bbb;}
.navbar {position: absolute; top: 136px; right: 1px; display: flex; flex-direction: column; align-items: center; gap: 9px; width: 25px; height: 152px; padding-top: 12px; border: 1px solid #ccc; border-radius: 4px; background: #f4f4f4;}
.navbar svg {width: 17px; height: 17px;}

/* Layout tabs */
#layouts {display: flex; height: 17px; padding-left: 1px; border-top: 1px solid #888; border-bottom: 4px solid #b0b0b0; background: #d4d0c8; color: #222; font-family: "Liberation Sans", sans-serif; font-size: 8px;}
#layouts button {width: 10px; padding-left: 1px; border-right: 1px solid #aaa;}
#layouts svg {width: 7px; height: 7px; fill: #888; stroke: #888;}
#layouts a {position: relative; min-width: 27px; padding: 1px 6px 0px 5px;}
#layouts a::after {content: ""; position: absolute; top: 0px; right: 2px; height: 12px; border-right: 1px solid #333; transform: skewX(-24deg);}
#layouts .on {padding: 1px 7px 0px 10px; background: #fff; clip-path: polygon(0px 0px, 100% 0px, 90% 100%, 6px 100%);}

/* Command line */
#command {display: flex; height: 37px; font-family: "DejaVu Sans Mono", monospace; font-size: 8px; border-bottom: 1px solid #555;}
#command p {font-size: 8px;}
.grip {width: 15px; background: linear-gradient(#8a8a8a, #444);}
.grip svg {width: 15px; height: 37px;}
.lines {flex: 1; background: #fff;}
.lines p {height: 21px; padding: 8px 0px 0px 2px; border-bottom: 1px solid #999; background: #c8c8c8; color: #111;}
.lines label {display: flex; align-items: center; gap: 4px; height: 16px; padding-left: 4px;}
.lines svg {width: 11px; height: 10px;}
#command input {flex: 1; font-style: italic;}

/* Status bar */
#status {display: flex; height: 16px; background: linear-gradient(#fff, #c4ccd4); color: #111; font-family: "Liberation Sans", sans-serif; font-size: 8px; line-height: 17px;}
.coords {width: 122px; padding-left: 8px;}
.group {display: flex; border-left: 1px solid #888; background: #b6b6b6;}
.group.right {margin-left: auto;}
.group button {display: flex; align-items: center; justify-content: center; width: 16px; gap: 2px; border-right: 1px solid #8c8c8c; background: linear-gradient(#cacaca, #a8a8a8);}
.group svg {width: 14px; height: 14px;}
.group .lit {background: linear-gradient(#e0f4fc, #9ad0ea);}
.group .label {width: auto; padding: 0px 1px;}
.group .slim {width: 8px;}
.gap {width: 12px; background: #dfe3e6;}
.thin {width: 3px;}
.gray {filter: grayscale(1);}
.tray {display: flex; align-items: center; gap: 2px; width: 33px; margin: 1px; padding-left: 1px; background: #ddd;}
.group .resize {width: 12px; height: 15px; background: #dde1e5;}
```
